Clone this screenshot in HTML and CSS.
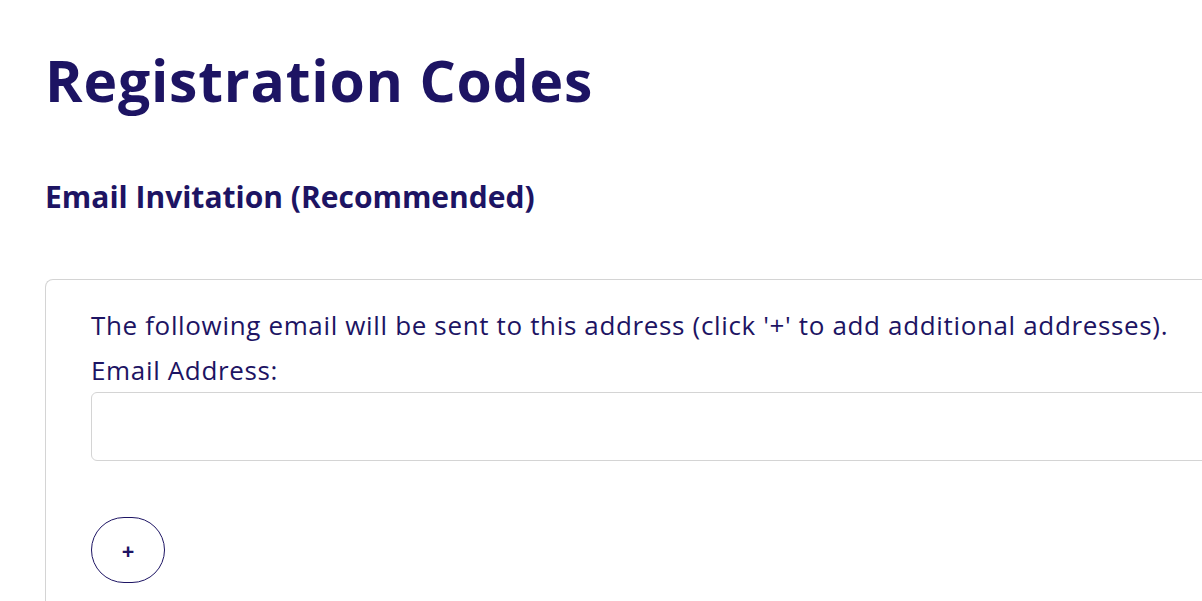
FILE: index.html
```html
<!DOCTYPE html>
<html>
<head>
<meta charset="utf-8">
<link rel="stylesheet" href="styles.css">
</head>
<body>
<main class="page">
  <h1 class="title">Registration Codes</h1>
  <h2 class="subtitle">Email Invitation (Recommended)</h2>
  <section class="card">
    <p class="intro">The following email will be sent to this address (click '+' to add additional addresses).</p>
    <label class="label" for="email">Email Address:</label>
    <input class="input" id="email" type="email">
    <button class="add" type="button">+</button>
  </section>
</main>
</body>
</html>
```
FILE: styles.css
```css
html, body {
  margin: 0;
  padding: 0;
  background: #ffffff;
  overflow: hidden;
}
body {
  font-family: "Open Sans", Lato, sans-serif;
  color: #1d1463;
}
.page {
  padding: 47px 0 0 45px;
}
.title {
  margin: 0;
  font-size: 57px;
  font-weight: 700;
  line-height: 66px;
  letter-spacing: 0.8px;
}
.subtitle {
  margin: 66px 0 0 0;
  font-size: 30px;
  font-weight: 700;
  line-height: 36px;
}
.card {
  margin-top: 64px;
  border: 1px solid #d4d4d4;
  border-right: none;
  border-radius: 8px 0 0 0;
  padding: 23px 0 40px 45px;
  min-height: 400px;
}
.intro {
  margin: 0;
  font-size: 26px;
  line-height: 45px;
  letter-spacing: 0.65px;
}
.label {
  display: block;
  font-size: 26px;
  line-height: 45px;
  letter-spacing: 0.65px;
}
.input {
  display: block;
  box-sizing: border-box;
  width: calc(100% + 20px);
  height: 69px;
  margin-top: -1px;
  border: 1px solid #d4d4d4;
  border-radius: 6px;
  font: inherit;
}
.add {
  display: block;
  margin-top: 56px;
  width: 74px;
  height: 66px;
  border: 1px solid #1d1463;
  border-radius: 33px;
  background: #fff;
  color: #1d1463;
  font-family: "Open Sans", sans-serif;
  font-size: 22px;
  font-weight: 700;
  padding: 0;
}
```
